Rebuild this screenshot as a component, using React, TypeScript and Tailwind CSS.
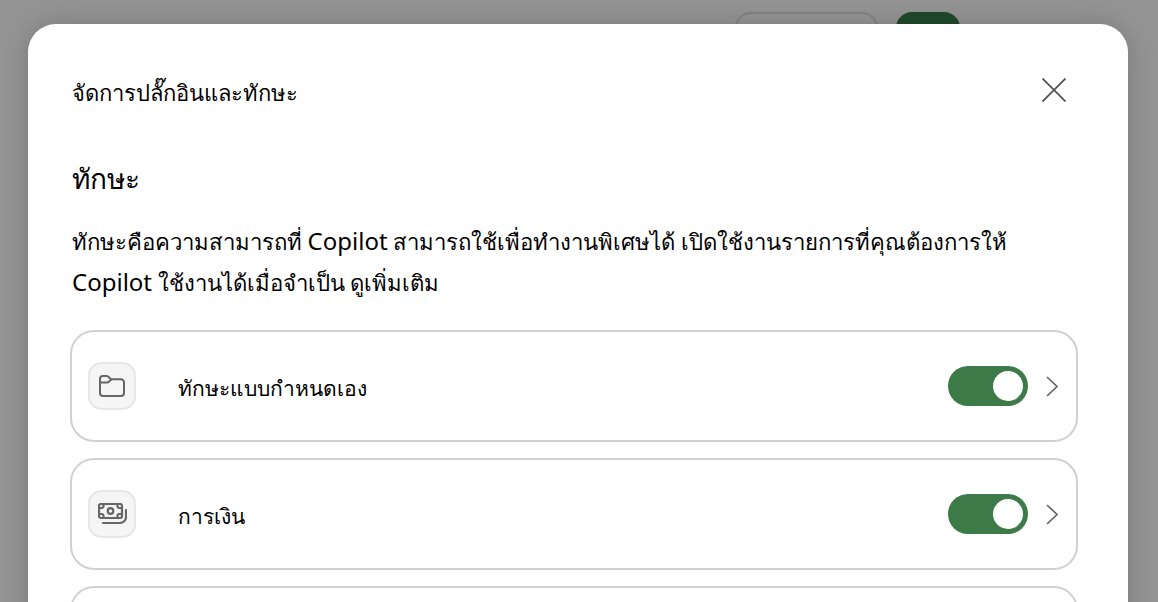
const FolderIcon = () => (
  <svg width="26" height="22" viewBox="0 0 26 22" fill="none" stroke="#666666" strokeWidth="2" strokeLinejoin="round">
    <path d="M1 4a3 3 0 0 1 3-3h3.600c.7 0 1.300.3 1.800.7l2 2c.4.4.9.6 1.500.6H22a3 3 0 0 1 3 3V18a3 3 0 0 1-3 3H4a3 3 0 0 1-3-3z" />
    <path d="M1 7.500h7c.7 0 1.300-.3 1.800-.7l3-2.500" />
  </svg>
);

const MoneyIcon = () => (
  <svg width="29" height="22" viewBox="0 0 29 22" fill="none" stroke="#666666" strokeWidth="2.200">
    <rect x="1" y="1" width="23" height="14" rx="2" />
    <circle cx="12.500" cy="8" r="2.800" />
    <path d="M1.500 5H4a2 2 0 0 0 1.500-1.500V1.500M19.500 1.500v2A2 2 0 0 0 21 5h2.500M1.500 11H4a2 2 0 0 1 1.500 1.500v2M19.500 14.500v-2A2 2 0 0 1 21 11h2.500" />
    <path d="M5 20h17a6 6 0 0 0 6-6V7" strokeLinecap="round" />
  </svg>
);

const Row = ({ icon, label }: { icon?: React.ReactNode; label?: string }) => (
  <div className="flex h-28 shrink-0 items-center rounded-3xl border-2 border-[#d1d1d1] pl-4 pr-[18px]">
    {icon && (
      <>
        <div className="flex h-12 w-12 items-center justify-center rounded-[14px] border-2 border-[#e6e6e6] bg-[#f5f5f5]">
          {icon}
        </div>
        <span className="ml-[42px] flex-1 translate-y-[4px] text-[21px] text-black">{label}</span>
        <div className="flex h-10 w-20 items-center justify-end rounded-full bg-[#3c7a47] pr-[5px]">
          <div className="h-[30px] w-[30px] rounded-full bg-white" />
        </div>
        <svg className="ml-[18px]" width="12" height="21" viewBox="0 0 12 21" fill="none" stroke="#666666" strokeWidth="1.700">
          <path d="M1 1l10 9.500L1 20" />
        </svg>
      </>
    )}
  </div>
);

export default function App() {
  return (
    <div className="relative h-[602px] w-[1158px] overflow-hidden bg-[#949494] font-['Liberation_Serif','Noto_Sans',serif]">
      <div className="flex justify-end gap-[18px] pr-[198px] pt-3">
        <div className="h-12 w-[143px] rounded-2xl border-2 border-[#848484]" />
        <div className="h-12 w-16 rounded-2xl bg-[#1f4a2b]" />
      </div>
      <div className="absolute left-7 top-6 flex h-[640px] w-[1100px] flex-col overflow-hidden rounded-[28px] bg-white pl-[42px] pr-[50px] shadow-[0_0_28px_rgba(0,0,0,0.18)]">
        <div className="flex items-start justify-between pt-[50px]">
          <h1 className="ml-0.5 mt-[4px] text-[22px] font-normal leading-8 text-black">จัดการปลั๊กอินและทักษะ</h1>
          <svg className="mr-[12px] mt-[4px]" width="24" height="24" viewBox="0 0 24 24" fill="none" stroke="#505050" strokeWidth="1.700">
            <path d="M0.500 0.500l23 23M23.500 0.500l-23 23" />
          </svg>
        </div>
        <h2 className="ml-0.5 mt-[50px] text-[28px] font-normal leading-10 text-black">ทักษะ</h2>
        <p className="ml-0.5 mt-[22px] whitespace-nowrap text-[22.15px] leading-[41px] text-black">
          ทักษะคือความสามารถที่ <span className="font-['Noto_Sans'] text-[24px] leading-none">Copilot</span> สามารถใช้เพื่อทำงานพิเศษได้ เปิดใช้งานรายการที่คุณต้องการให้
          <br />
          <span className="font-['Noto_Sans'] text-[24px] leading-none">Copilot</span> ใช้งานได้เมื่อจำเป็น ดูเพิ่มเติม
        </p>
        <div className="mt-[26px] flex flex-col gap-4">
          <Row icon={<FolderIcon />} label="ทักษะแบบกำหนดเอง" />
          <Row icon={<MoneyIcon />} label="การเงิน" />
          <Row />
        </div>
      </div>
    </div>
  );
}
